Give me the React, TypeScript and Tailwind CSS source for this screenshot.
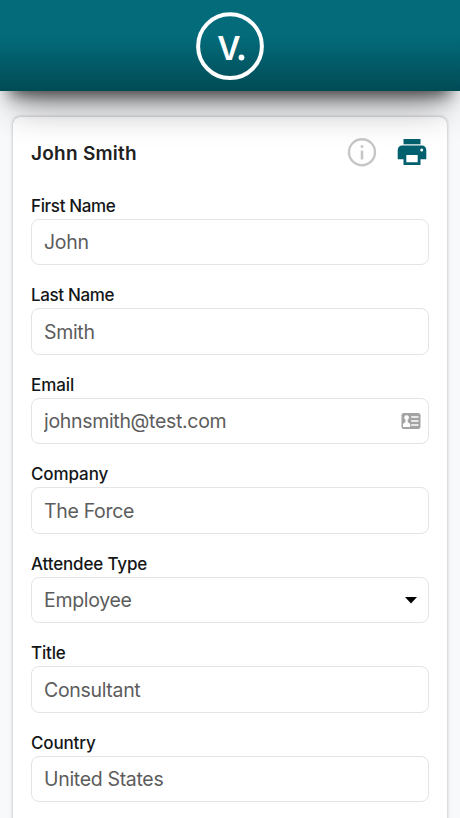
import { useState } from "react";

type Field = {
  id: string;
  label: string;
  value: string;
  kind?: "text" | "email" | "select";
  labelClass: string;
};

const fields: Field[] = [
  { id: "first-name", label: "First Name", value: "John", labelClass: "tracking-[-0.35px]" },
  { id: "last-name", label: "Last Name", value: "Smith", labelClass: "tracking-[-0.35px]" },
  { id: "email", label: "Email", value: "johnsmith@test.com", kind: "email", labelClass: "tracking-[-0.1px]" },
  { id: "company", label: "Company", value: "The Force", labelClass: "tracking-[-0.1px]" },
  { id: "attendee-type", label: "Attendee Type", value: "Employee", kind: "select", labelClass: "tracking-[-0.15px]" },
  { id: "title", label: "Title", value: "Consultant", labelClass: "tracking-[-0.15px]" },
  { id: "country", label: "Country", value: "United States", labelClass: "tracking-[-0.15px]" },
];

const Logo = () => (
  <svg width="70" height="70" viewBox="0 0 70 70" fill="none" aria-label="V.">
    <circle cx="35" cy="35.2" r="31.9" stroke="white" strokeWidth="4" />
    <text
      x="34"
      y="48.7"
      textAnchor="middle"
      fill="white"
      className="font-['Inter',sans-serif] text-[32px] font-semibold"
    >
      V
    </text>
    <circle cx="46.5" cy="46.5" r="2.9" fill="white" />
  </svg>
);

const InfoIcon = () => (
  <svg width="30" height="30" viewBox="0 0 30 30" fill="none">
    <circle cx="15" cy="15.2" r="13" stroke="#c6c6c6" strokeWidth="2.4" />
    <path d="M15 13.5v9" stroke="#c6c6c6" strokeWidth="2.6" />
    <path d="M15 8.2v2.6" stroke="#c6c6c6" strokeWidth="2.6" />
  </svg>
);

const PrintIcon = () => (
  <svg width="30" height="28" viewBox="0 0 30 28" fill="#00606d">
    <path d="M6.5 1h17v5.3h-17z" />
    <path
      fillRule="evenodd"
      d="M5 7.6h20a4.3 4.3 0 0 1 4.3 4.3v9.3h-5.8V27h-17v-5.8H.7v-9.3A4.3 4.3 0 0 1 5 7.6Zm4.3 9.4v7.3h11.4V17H9.3Zm15.4-6.4a1.5 1.5 0 1 0 0 3 1.5 1.5 0 0 0 0-3Z"
    />
  </svg>
);

const ContactCardIcon = () => (
  <svg width="20" height="18" viewBox="0 0 20 18" fill="none">
    <rect x="0.5" y="0.9" width="19" height="16.2" rx="2.4" fill="#a3a3a3" />
    <circle cx="5.6" cy="5.6" r="2.4" fill="white" />
    <path d="M2 15v-2.4c0-1.6 1.8-2.1 2.5-2.4V7.5h2.2v2.7c.7.3 2.5.8 2.5 2.4V15z" fill="white" />
    <path d="M10.2 5.1h7.3M10.2 9h7.3M10.2 12.9h7.3" stroke="white" strokeWidth="1.5" />
  </svg>
);

const FormField = ({ field }: { field: Field }) => {
  const [value, setValue] = useState<string>(field.value);
  const box =
    "block h-[46.5px] w-full appearance-none rounded-lg border border-[#e2e4e5] bg-white px-3 pt-px text-[19.5px] tracking-[-0.32px] text-[#5c5c5c] outline-none";

  return (
    <div className="mb-[19px]">
      <label
        htmlFor={field.id}
        className={"block h-6 text-[17px] leading-[22px] font-medium text-[#141618] " + field.labelClass}
      >
        {field.label}
      </label>
      <div className="relative">
        {field.kind === "select" ? (
          <select id={field.id} value={value} onChange={(e) => setValue(e.target.value)} className={box}>
            <option>{field.value}</option>
          </select>
        ) : (
          <input id={field.id} value={value} onChange={(e) => setValue(e.target.value)} className={box} />
        )}
        {field.kind === "email" && (
          <span className="absolute top-[14px] right-2">
            <ContactCardIcon />
          </span>
        )}
        {field.kind === "select" && (
          <svg width="12" height="7" viewBox="0 0 12 7" className="pointer-events-none absolute top-[20px] right-3">
            <path d="M0 0h12L6 6.5z" fill="black" />
          </svg>
        )}
      </div>
    </div>
  );
};

const App = () => {
  return (
    <div className="h-[818px] overflow-hidden bg-[#f8f9fb] font-['Inter','Liberation_Sans',sans-serif]">
      <header className="relative z-10 flex h-[91px] justify-center bg-linear-to-b from-[#036b7a] from-40% to-[#014b55] pt-[11px] shadow-[0_14px_16px_-10px_rgba(0,0,0,0.65),0_30px_36px_-14px_rgba(0,0,0,0.36)]">
        <Logo />
      </header>
      <main className="mx-[13px] mt-[26px] h-[760px] rounded-lg bg-white px-[18px] pt-5 shadow-[0_0_3px_0.5px_rgba(0,0,0,0.17)]">
        <div className="flex h-[30px] items-center justify-between">
          <h1 className="pt-1 text-[19px] font-semibold tracking-[0.25px] text-[#212121]">John Smith</h1>
          <div className="mr-0.5 flex items-center gap-5">
            <InfoIcon />
            <PrintIcon />
          </div>
        </div>
        <form className="mt-[27.6px]">
          {fields.map((field) => (
            <FormField key={field.id} field={field} />
          ))}
        </form>
      </main>
    </div>
  );
};

export default App;
